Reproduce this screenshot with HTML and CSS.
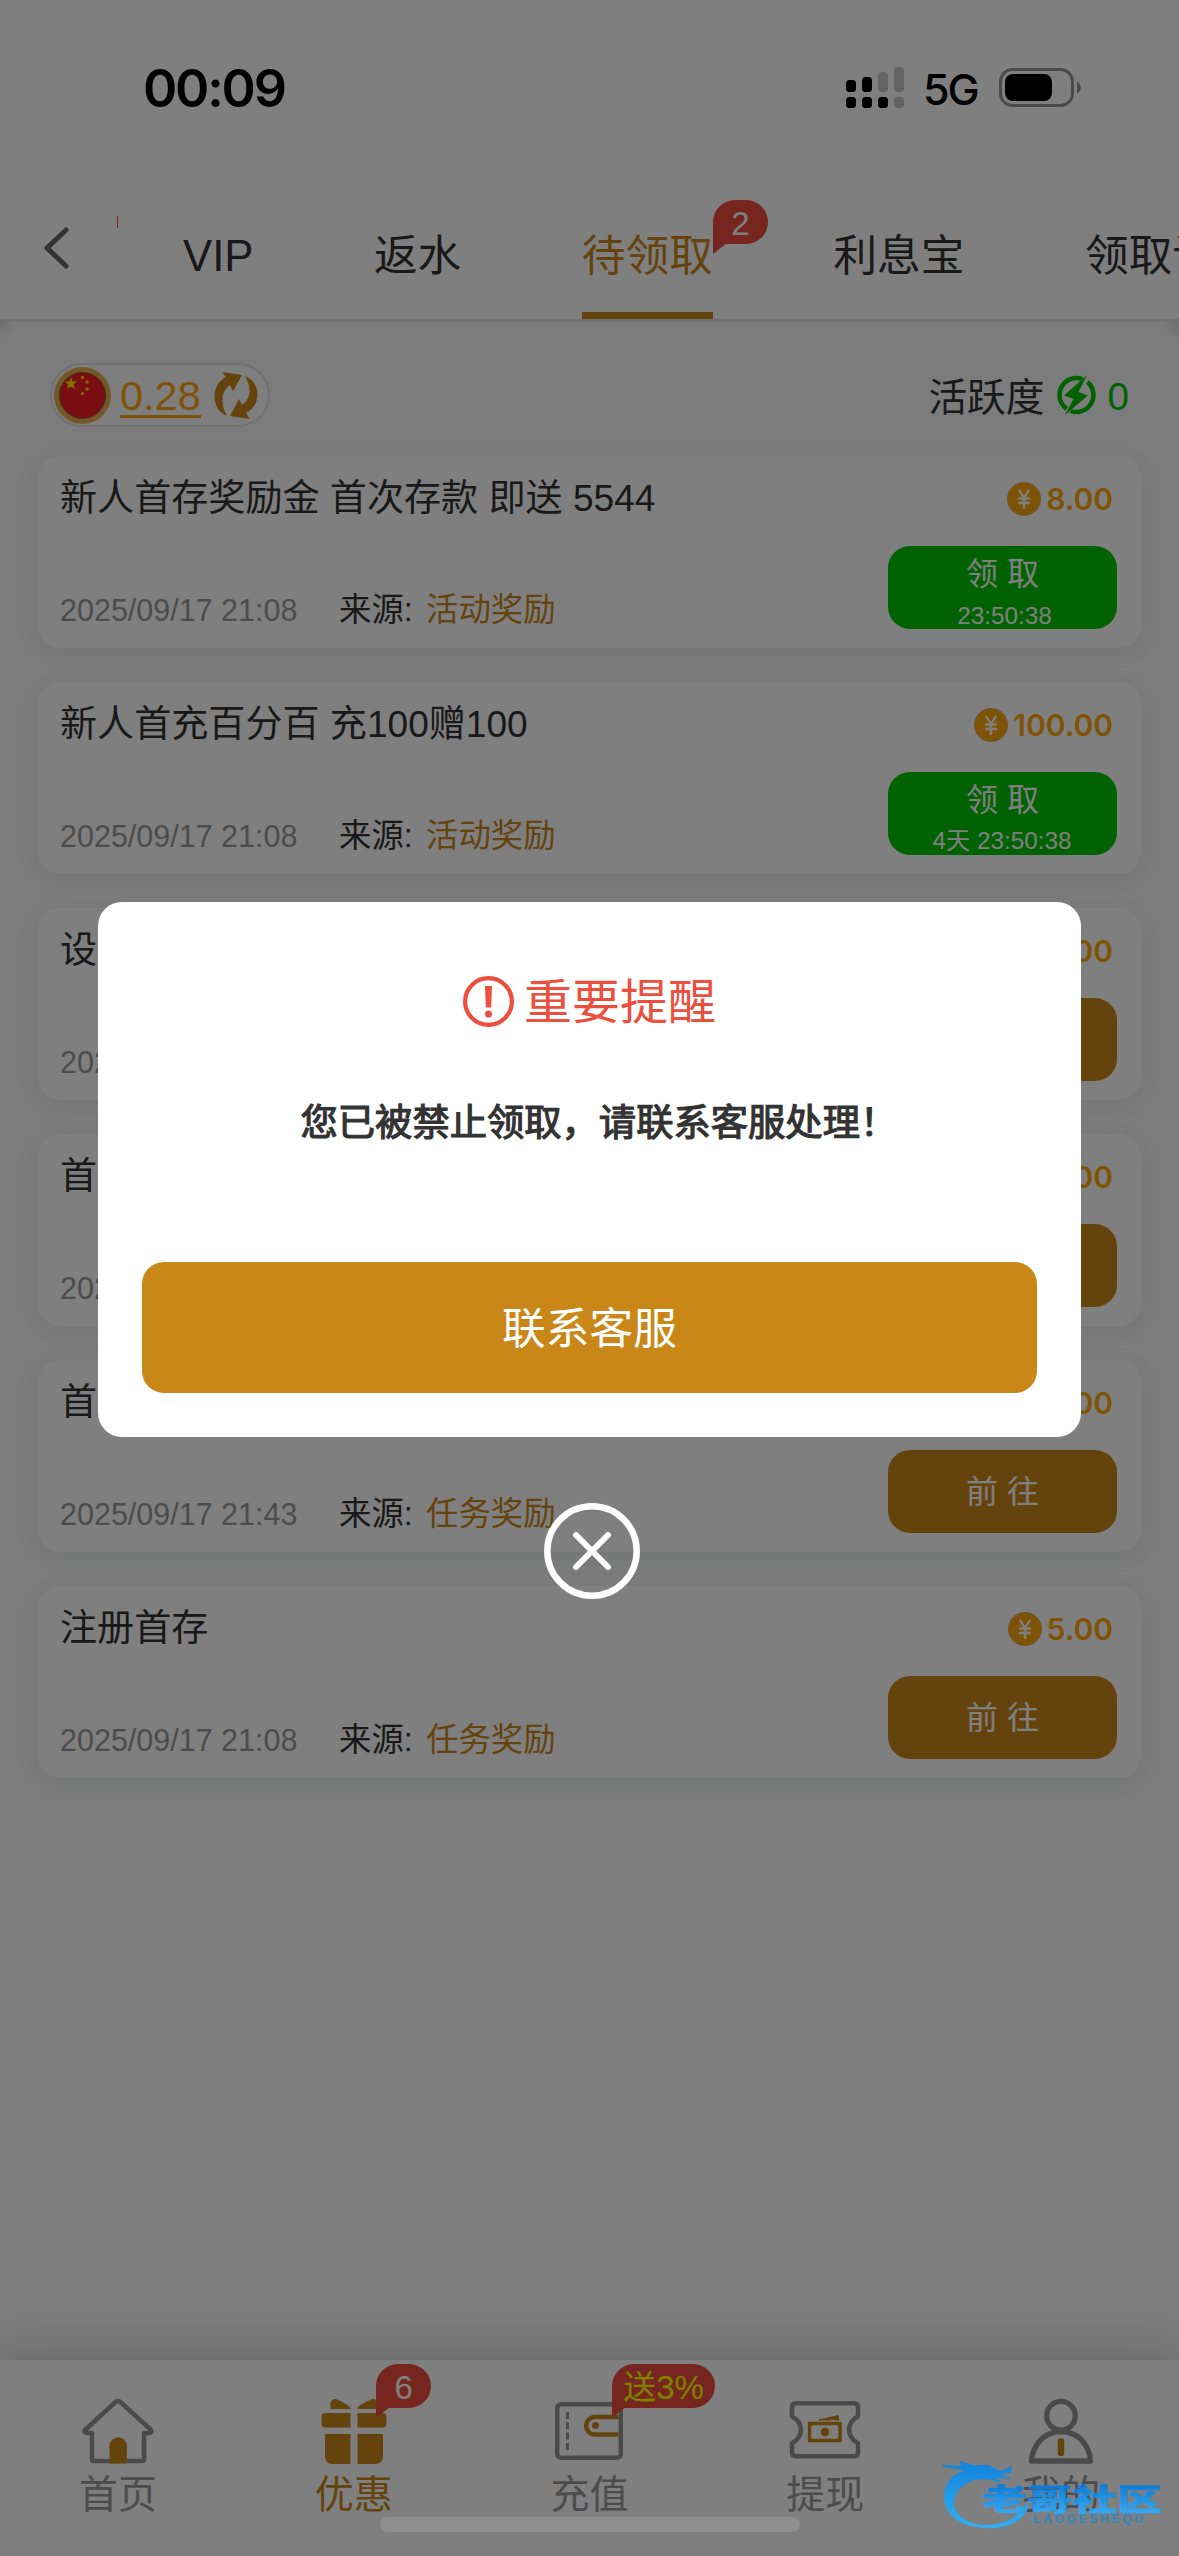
FILE: index.html
```html
<!DOCTYPE html>
<html lang="zh-CN">
<head>
<meta charset="utf-8">
<title>待领取</title>
<link rel="stylesheet" href="styles.css">
</head>
<body>
<svg width="0" height="0" class="defs">
  <symbol id="coin" viewBox="0 0 34 34"><circle cx="17" cy="17" r="16.6" fill="#ffa60a" stroke="#c9a565" stroke-width=".8"/><path d="M12.3 8.5 17 16l4.700-7.500M17 16v10M12 16.500h10M12 21h10" fill="none" stroke="#fff" stroke-width="2.300" stroke-linecap="round"/></symbol>
</svg>
<div class="app">
  <header class="status">
    <span class="clock">00:09</span>
    <div class="status-right">
      <svg class="signal" width="58" height="41" viewBox="0 0 58 41"><g fill="#000"><rect y="13" width="10" height="12" rx="3.500"/><rect x="16" y="10" width="10" height="15" rx="3.500"/><rect y="30" width="10" height="11" rx="3.500"/><rect x="16" y="30" width="10" height="11" rx="3.500"/><rect x="32" y="30" width="10" height="11" rx="3.500"/></g><g fill="#c8c8c8"><rect x="32" y="5" width="10" height="20" rx="3.500"/><rect x="48" width="10" height="25" rx="3.500"/><rect x="48" y="30" width="10" height="11" rx="3.500"/></g></svg>
      <span class="net">5G</span>
      <svg class="battery" width="82" height="39" viewBox="0 0 82 39"><rect x="1.500" y="1.500" width="72" height="36" rx="12" fill="none" stroke="#959595" stroke-width="3"/><rect x="6" y="6" width="47" height="27" rx="8" fill="#000"/><path d="M78 13.500c5 2 5 10 0 12z" fill="#959595"/></svg>
    </div>
  </header>
  <nav class="tabs">
    <svg class="back" width="28" height="42" viewBox="0 0 28 42"><path d="M24 3 5 21l19 18" fill="none" stroke="#666" stroke-width="5" stroke-linecap="round" stroke-linejoin="round"/></svg>
    <div class="tab-scroll">
      <i class="badge-edge"></i>
      <span class="tab">VIP</span>
      <span class="tab">返水</span>
      <span class="tab active">待领取<b class="badge tab-badge">2</b></span>
      <span class="tab">利息宝</span>
      <span class="tab">领取记录</span>
    </div>
  </nav>
  <main class="content">
    <div class="summary">
      <div class="balance">
        <svg width="57" height="57" viewBox="0 0 57 57"><circle cx="28.500" cy="28.500" r="28.500" fill="#f0b04a"/><circle cx="28.500" cy="28.500" r="25.500" fill="none" stroke="#dcb060" stroke-width="2.500"/><circle cx="28.500" cy="28.500" r="23" fill="#f21a24" stroke="#8a5a28"/><path d="m17 10 1.700 4.400 4.600.2-3.600 3 1.200 4.500-3.900-2.500-3.900 2.500 1.200-4.500-3.600-3 4.600-.2z" fill="#ffe600"/><g fill="#ffc800"><circle cx="28.500" cy="10.500" r="1.800"/><circle cx="33" cy="15" r="1.800"/><circle cx="33" cy="22" r="1.800"/><circle cx="28.500" cy="26.500" r="1.800"/></g></svg>
        <span class="amount">0.28</span>
        <svg class="refresh" width="46" height="48" viewBox="0 0 46 48"><g fill="#c98718"><path d="M14 45C-3 38-2 13 13 6L9 1l20 3-9 16-3-6C8 20 7 33 14 45z"/><path d="M32 5c17 7 16 30 1 37l4 6-20-3 9-17 3 6c9-6 10-17 3-29z"/></g></svg>
      </div>
      <div class="activity">
        <span class="activity-name">活跃度</span>
        <svg width="42" height="40" viewBox="0 0 42 40"><g fill="none" stroke="#00c400" stroke-width="4.500"><path d="M10.750 33.900A17 17 0 0 1 26.300 4"/><path d="M31.400 7A17 17 0 0 1 14.700 36"/></g><path d="M31 0 8 20.500l9.500 3.500L9 40l23-19.500-9.500-3.500z" fill="#00c400"/></svg>
        <span class="points">0</span>
      </div>
    </div>
    <section class="list">
      <article class="card">
        <div class="row"><h3>新人首存奖励金 首次存款 即送 5544</h3><span class="prize"><svg class="coin"><use href="#coin"/></svg>8.00</span></div>
        <div class="row foot"><time>2025/09/17 21:08</time><span class="label">来源:</span><span class="source">活动奖励</span><button class="btn claim"><span>领 取</span><small>23:50:38</small></button></div>
      </article>
      <article class="card">
        <div class="row"><h3>新人首充百分百 充100赠100</h3><span class="prize"><svg class="coin"><use href="#coin"/></svg>100.00</span></div>
        <div class="row foot"><time>2025/09/17 21:08</time><span class="label">来源:</span><span class="source">活动奖励</span><button class="btn claim"><span>领 取</span><small class="days">4天 23:50:38</small></button></div>
      </article>
      <article class="card">
        <div class="row"><h3>设</h3><span class="prize">5.00</span></div>
        <div class="row foot"><time>2025/09/17 21:08</time><button class="btn"></button></div>
      </article>
      <article class="card">
        <div class="row"><h3>首</h3><span class="prize">5.00</span></div>
        <div class="row foot"><time>2025/09/17 21:08</time><button class="btn"></button></div>
      </article>
      <article class="card">
        <div class="row"><h3>首</h3><span class="prize">5.00</span></div>
        <div class="row foot"><time>2025/09/17 21:43</time><span class="label">来源:</span><span class="source">任务奖励</span><button class="btn"><span>前 往</span></button></div>
      </article>
      <article class="card">
        <div class="row"><h3>注册首存</h3><span class="prize"><svg class="coin"><use href="#coin"/></svg>5.00</span></div>
        <div class="row foot"><time>2025/09/17 21:08</time><span class="label">来源:</span><span class="source">任务奖励</span><button class="btn"><span>前 往</span></button></div>
      </article>
    </section>
  </main>
  <footer class="tabbar">
    <div class="item">
      <svg width="72" height="66" viewBox="0 0 72 66"><path d="M33 4.500q3-3 6 0L69 32q1.500 3-2 3h-5v26q0 2-2 2H12q-2 0-2-2V35H5q-3.500 0-2-3z" fill="none" stroke="#959595" stroke-width="4.500" stroke-linejoin="round"/><path d="M27.500 65.500V48a8.700 8.700 0 0 1 17.400 0v17.500z" fill="#c98718"/></svg>
      <span>首页</span>
    </div>
    <div class="item on">
      <svg width="66" height="66" viewBox="0 0 66 66"><g fill="#c98718"><path d="M9.500 11V5q1-4.500 5-4 9 3 15 8.500V11zM56.500 11V5q-1-4.500-5-4-9 3-15 8.500V11z"/><path d="M4 15h25.500v14.500H4q-3.500 0-3.500-4v-7Q.5 15 4 15zM36.500 15H62q3.500 0 3.500 3.500v7q0 4-3.500 4H36.500z"/><path d="M4 36h25.500v30H12q-8 0-8-8zM36.500 36H62v22q0 8-8 8H36.500z"/></g></svg>
      <span>优惠</span><b class="badge bar-badge">6</b>
    </div>
    <div class="item">
      <svg width="68" height="66" viewBox="0 0 68 66"><rect x="2.200" y="6.200" width="63.600" height="53.600" rx="4" fill="none" stroke="#959595" stroke-width="4.500"/><path d="M12.500 14v38" stroke="#959595" stroke-width="3" stroke-dasharray="7 3.300"/><path d="M63.500 19H39a8.800 8.800 0 0 0 0 17.500h24.500" fill="none" stroke="#c98718" stroke-width="4.500"/><circle cx="40.500" cy="27.500" r="3.600" fill="#c98718"/></svg>
      <span>充值</span><b class="badge bar-badge yellow">送3%</b>
    </div>
    <div class="item">
      <svg width="72" height="66" viewBox="0 0 72 66"><path d="M7 5.200h58q4 0 4 4v9c-12 7-12 20 0 27v9q0 4-4 4H7q-4 0-4-4v-9c12-7 12-20 0-27v-9q0-4 4-4z" fill="none" stroke="#959595" stroke-width="4.500" stroke-linejoin="round"/><path d="M20.500 25.500h30.500v17H20.500z" fill="none" stroke="#c98718" stroke-width="3.400"/><path d="M21 28v-2h4zM51 28v-2h-4zM21 40v3h4zM51 40v3h-4zM30 22l19-4.500 1 4.500h-4l-1-1-4 1z" fill="#c98718" stroke="#c98718"/><circle cx="36" cy="34" r="4.300" fill="#c98718"/></svg>
      <span>提现</span>
    </div>
    <div class="item">
      <svg width="66" height="66" viewBox="0 0 66 66"><g fill="none" stroke="#959595" stroke-width="5.300" stroke-linejoin="round"><circle cx="33" cy="17.700" r="14.300"/><path d="M3.500 63q0-6 3-12 8-17 26.500-17.500Q51.500 34 59.500 51q3 6 3 12z"/></g><path d="M33 43.500v11.500" stroke="#c98718" stroke-width="6.500" stroke-linecap="round"/></svg>
      <span>我的</span>
    </div>
  </footer>
</div>
<div class="overlay">
  <div class="dialog">
    <div class="dialog-title"><svg width="51" height="51" viewBox="0 0 51 51"><circle cx="25.500" cy="25.500" r="23.400" fill="none" stroke="#eb4f3e" stroke-width="4.200"/><path d="M22 10h7l-.8 21.500h-5.400z" fill="#eb4f3e"/><circle cx="25.500" cy="38" r="3.500" fill="#eb4f3e"/></svg><span>重要提醒</span></div>
    <p>您已被禁止领取，请联系客服处理！</p>
    <button class="contact">联系客服</button>
  </div>
  <svg class="close" width="96" height="96" viewBox="0 0 96 96"><circle cx="48" cy="48" r="44.700" fill="none" stroke="#fff" stroke-width="6.500"/><path d="m32 32 32 32m0-32L32 64" stroke="#fff" stroke-width="6" stroke-linecap="round"/></svg>
</div>
<div class="home-indicator"></div>
<svg class="watermark" width="226" height="76" viewBox="0 0 226 76">
  <defs><linearGradient id="blue" gradientUnits="userSpaceOnUse" x1="0" y1="5" x2="0" y2="70"><stop stop-color="#0684e6"/><stop offset="1" stop-color="#2cb4ff"/></linearGradient><linearGradient id="blue2" x1="0" y1="0" x2="0" y2="1"><stop offset=".25" stop-color="#067ee0"/><stop offset=".85" stop-color="#2cadfb"/></linearGradient></defs>
  <path d="M1 8 20 9 19 4 31 8 47 8 60 14 71 9 70 16 59 17 71 22 54 21 62 26 45 22 33 23C10 31 6 53 25 63 44 74 74 66 84 49L88 45C88 61 67 73 45 71 18 70 1 56 3 37 5 23 14 15 24 14L16 12 2 10z" fill="url(#blue)"/>
  <text class="wm-name" x="0" y="0" transform="translate(41 53) scale(1.500 1)" fill="url(#blue2)" textLength="120" lengthAdjust="spacing">老哥社区</text>
  <text class="wm-sub" x="92" y="65.500" textLength="110" lengthAdjust="spacing">LAOGESHEQU</text>
</svg>
</body>
</html>
```
FILE: styles.css
```css
* { box-sizing: border-box; }
body { margin: 0; width: 1179px; height: 2556px; overflow: hidden; position: relative; font-family: "Liberation Sans", "Noto Sans CJK SC", sans-serif; color: #333; background: #fff; }
.defs { position: absolute; }
svg { display: block; flex: none; }
button { border: 0; padding: 0; font: inherit; color: #fff; }
.app { height: 2556px; display: flex; flex-direction: column; }

.status { height: 178px; padding: 0 98px 0 143px; display: flex; justify-content: space-between; align-items: flex-start; color: #000; font-family: Inter, sans-serif; }
.clock { font-size: 52px; font-weight: 600; line-height: 60px; margin-top: 59px; letter-spacing: -2.200px; }
.status-right { display: flex; align-items: flex-start; }
.signal { margin-top: 67px; }
.net { font-size: 43px; font-weight: 500; line-height: 50px; margin: 64px 0 0 19px; width: 76px; letter-spacing: -2px; }
.battery { margin-top: 68px; }

.tabs { height: 144px; border-bottom: 3px solid #e2e2e2; display: flex; }
.back { margin: 49px 0 0 42px; }
.tab-scroll { flex: 1; margin-left: 47px; padding-left: 66px; display: flex; gap: 120.500px; overflow: hidden; font-size: 43.700px; line-height: 50px; position: relative; }
.badge-edge { position: absolute; left: 0; top: 38px; width: 1px; height: 12px; background: #eb4f3e; }
.tab { flex: none; position: relative; height: 141px; padding-top: 53px; white-space: nowrap; }
.tab.active { color: #c98718; border-bottom: 7px solid #c98718; }
.badge { position: absolute; min-width: 55px; height: 44px; border-radius: 22px 22px 22px 0; background: #ec4d3d; color: #fff; font-size: 33px; font-weight: 400; line-height: 47px; text-align: center; white-space: nowrap; }
.badge::after { content: ""; position: absolute; left: 0; top: 43px; border-top: 11px solid #ec4d3d; border-right: 14px solid transparent; }
.tab-badge { left: 131px; top: 22px; }

.content { flex: 1; padding: 41px 38px 0; background: radial-gradient(circle 17px at 0 0, #ddd, transparent), radial-gradient(circle 17px at 100% 0, #ddd, transparent), #f8f8f8; }
.summary { display: flex; justify-content: space-between; padding: 0 12px; }
.balance { height: 64px; width: 220px; border: 2px solid #e2e2e2; border-radius: 32px; background: #fcfcfc; display: flex; align-items: center; padding-left: 2px; }
.amount { margin-left: 9px; height: 43px; margin-top: 3px; border-bottom: 3px solid #ffa60a; color: #ffa60a; font-size: 41.500px; line-height: 41px; }
.refresh { margin-left: 12px; }
.activity { display: flex; align-items: center; height: 64px; font-size: 38.700px; }
.activity-name { margin-top: -3px; }
.activity svg { margin: 0 9px 0 12px; }
.points { color: #00c400; margin-top: 3px; }

.list { margin-top: 29px; display: flex; flex-direction: column; gap: 34px; }
.card { height: 192px; border-radius: 22px; background: #fff; box-shadow: 0 4px 20px rgba(90, 110, 110, .1); padding: 21px 24px 0 22px; }
.row { display: flex; align-items: center; justify-content: space-between; height: 44px; }
.card h3 { margin: -2px 0 0; font-size: 37.100px; font-weight: 400; line-height: 44px; }
.prize { display: flex; align-items: center; gap: 5px; padding-right: 4px; color: #ffa60a; font: 600 30px/44px Inter, sans-serif; }
.coin { width: 34px; height: 34px; }
.foot { height: 83px; margin-top: 25px; justify-content: flex-start; font-size: 32.400px; }
.foot time { width: 279px; margin-top: 45px; font-size: 30.500px; color: #999; }
.label { width: 87px; margin-top: 38px; }
.source { color: #c98718; margin-top: 38px; }
.btn { margin-left: auto; width: 229px; height: 83px; border-radius: 22px; background: #c98718; display: flex; flex-direction: column; align-items: center; justify-content: center; font-size: 32px; line-height: 40px; }
.claim { background: #00c400; justify-content: flex-start; padding-top: 8px; }
.claim small { font-size: 24.300px; line-height: 30px; margin-top: 7px; padding-left: 4px; }
.claim .days { margin-top: 6px; padding: 0 1px 0 0; }

.tabbar { height: 196px; background: #fff; display: flex; box-shadow: 0 0 42px rgba(0, 0, 0, .2); }
.item { flex: 1; position: relative; display: flex; flex-direction: column; align-items: center; padding-top: 38px; color: #999; font-size: 39px; line-height: 50px; }
.item span { margin-top: 6px; }
.item.on { color: #c98718; }
.bar-badge { left: 140.500px; top: 4px; }
.bar-badge.yellow { color: #ff0; width: 103px; }

.overlay { position: absolute; inset: 0; background: rgba(0, 0, 0, .5); padding-top: 902px; display: flex; flex-direction: column; align-items: center; }
.dialog { width: 983px; height: 535px; border-radius: 24px; background: #fff; padding: 69px 44px 44px; display: flex; flex-direction: column; align-items: center; }
.dialog-title { display: flex; align-items: center; height: 60px; gap: 10px; color: #eb4f3e; font-size: 48px; line-height: 60px; }
.dialog-title span { margin-top: 3px; }
.dialog p { margin: 65px 0 0; font-size: 37.300px; -webkit-text-stroke: 1.200px #333; line-height: 54px; color: #333; white-space: nowrap; width: 578px; }
.contact { margin-top: auto; width: 895px; height: 131px; border-radius: 22px; background: #c98718; font-size: 43.700px; padding-bottom: 6px; }
.close { margin: 66px 0 0 5px; }
.home-indicator { position: absolute; left: 380px; top: 2517px; width: 420px; height: 15px; border-radius: 8px; background: #8e8e8e; }
.watermark { position: absolute; left: 941px; top: 2457px; opacity: .9; }
.wm-name { font: 900 30px "Noto Sans CJK SC", sans-serif; stroke: url(#blue2); stroke-width: .5px; }
.wm-sub { font: 700 12px "Liberation Sans", sans-serif; fill: #2b87c4; }
```
